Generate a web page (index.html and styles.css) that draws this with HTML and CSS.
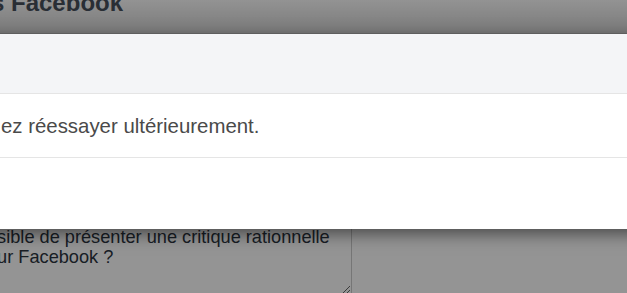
FILE: index.html
```html
<!DOCTYPE html>
<html lang="fr">
<head>
<meta charset="utf-8">
<title>Facebook</title>
<link rel="stylesheet" href="styles.css">
</head>
<body>
<div class="page">
  <header class="topbar">
    <h1 class="title">s Facebook</h1>
  </header>
  <main class="content">
    <div class="form-col">
      <textarea class="comment">ssible de présenter une critique rationnelle
sur Facebook ?</textarea>
    </div>
  </main>
</div>
<div class="backdrop"></div>
<div class="modal">
  <div class="modal-header"></div>
  <div class="modal-body"><p class="message">ez réessayer ultérieurement.</p></div>
  <div class="modal-footer"></div>
</div>
</body>
</html>
```

FILE: styles.css
```css
html, body {
  margin: 0;
  padding: 0;
  width: 627px;
  height: 293px;
  overflow: hidden;
  background: #ffffff;
  font-family: "Liberation Sans", Arial, sans-serif;
}

.page {
  margin-top: -26px;
}

.topbar {
  height: 60px;
  box-sizing: border-box;
  padding-top: 16px;
  border-bottom: 1px solid #b9b9b9;
  background: linear-gradient(to bottom, #ffffff 0, #fdfdfd 26px, #d4d4d4 58px);
}

.title {
  margin: 0 0 0 -9px;
  font-size: 24px;
  line-height: 1.1;
  font-weight: bold;
  color: #48505c;
  white-space: nowrap;
}

.content {
  display: flex;
}

.form-col {
  display: flex;
  margin-left: -20px;
  padding-top: 166px;
}

.comment {
  width: 372px;
  height: 95px;
  box-sizing: border-box;
  margin: 0;
  padding: 26px 10px 0 7px;
  border: 1px solid #cccccc;
  font-family: "Liberation Sans", Arial, sans-serif;
  font-size: 18.2px;
  line-height: 20px;
  color: #2b3440;
  background: #ffffff;
  overflow: hidden;
}

.backdrop {
  position: absolute;
  inset: 0;
  background: rgba(0, 0, 0, 0.42);
}

.modal {
  position: absolute;
  top: 34px;
  left: -400px;
  width: 1400px;
  background: #ffffff;
  box-shadow: 0 5px 15px rgba(0, 0, 0, 0.5);
}

.modal-header {
  height: 59px;
  background: #f4f5f7;
  border-bottom: 1px solid #e5e5e5;
}

.modal-body {
  padding: 18px 0 17px 401px;
  border-bottom: 1px solid #e5e5e5;
}

.message {
  margin: 0;
  font-size: 20.4px;
  line-height: 28px;
  color: #4a4a4a;
  white-space: nowrap;
}

.modal-footer {
  height: 71px;
}
```
